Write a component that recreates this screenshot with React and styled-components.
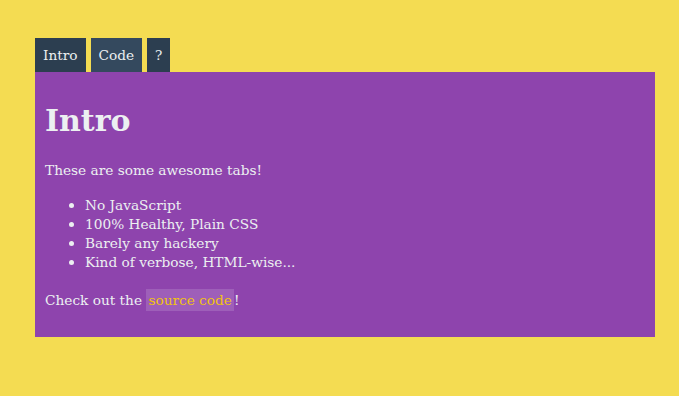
import styled, { createGlobalStyle } from "styled-components";

const GlobalStyle = createGlobalStyle`
  html, body {
    margin: 0;
    background: #f4dc52;
  }
  body {
    font-family: "DejaVu Serif", "Liberation Serif", serif;
    color: #ecf0f1;
  }
`;

const Page = styled.div`
  padding: 38px 24px 40px 35px;
`;

const TabBar = styled.div`
  display: flex;
  gap: 5px;
`;

const Tab = styled.div`
  height: 34px;
  padding: 0 8px;
  display: flex;
  align-items: center;
  font-size: 13.7px;
  background: ${({ $light }) => ($light ? "#34495e" : "#2c3e50")};
  color: #ecf0f1;
  cursor: pointer;
`;

const Panel = styled.div`
  width: 620px;
  height: 265px;
  box-sizing: border-box;
  background: #8e44ad;
  padding: 1px 10px;
  font-size: 13.7px;
  line-height: 19px;
`;

const Heading = styled.h1`
  font-size: 30px;
  line-height: 36px;
  margin: 30px 0 22px;
  font-weight: bold;
`;

const Text = styled.p`
  margin: 0;
`;

const List = styled.ul`
  margin: 16px 0 19px;
  padding-left: 40px;

  li::marker {
    font-size: 15px;
  }
`;

const Link = styled.a`
  color: #f1c40f;
  text-decoration: none;
  background: rgba(255, 255, 255, 0.15);
  padding: 3px 2px;
`;

export default function App() {
  return (
    <>
      <GlobalStyle />
      <Page>
        <TabBar>
          <Tab>Intro</Tab>
          <Tab $light>Code</Tab>
          <Tab>?</Tab>
        </TabBar>
        <Panel>
          <Heading>Intro</Heading>
          <Text>These are some awesome tabs!</Text>
          <List>
            <li>No JavaScript</li>
            <li>100% Healthy, Plain CSS</li>
            <li>Barely any hackery</li>
            <li>Kind of verbose, HTML-wise...</li>
          </List>
          <Text>
            Check out the <Link href="#">source code</Link>!
          </Text>
        </Panel>
      </Page>
    </>
  );
}
